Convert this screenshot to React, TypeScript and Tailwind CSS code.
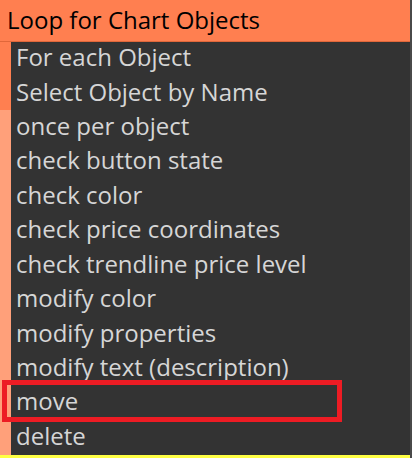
import React from "react";

const rows = [
  "For each Object",
  "Select Object by Name",
  "once per object",
  "check button state",
  "check color",
  "check price coordinates",
  "check trendline price level",
  "modify color",
  "modify properties",
  "modify text (description)",
  "move",
  "delete",
];

export default function App() {
  return (
    <div
      className="w-[412px] h-[458px] bg-[#333333] flex overflow-hidden relative"
      style={{ fontFamily: '"Open Sans", sans-serif' }}
    >
      <div className="flex-1 flex flex-col">
        <div className="h-[42px] bg-[#ff7f50] border-b border-[#e0673a] flex items-center pl-[7px] pb-[2px] text-[24px] text-black leading-none">
          Loop for Chart Objects
        </div>
        <div className="flex flex-1">
          <div className="w-[11px] flex flex-col">
            <div className="h-[68px] bg-[#ff7f50]" />
            <div className="flex-1 bg-[#ffa07a]" />
          </div>
          <div className="flex-1 flex flex-col">
            {rows.map((r) => (
              <div
                key={r}
                className="flex-1 flex items-center pl-[5px] pb-[4px] text-[24px] text-[#d6d6d6] leading-none"
              >
                {r}
              </div>
            ))}
          </div>
        </div>
        <div className="h-[3px] bg-[#ffff44]" />
      </div>
      <div className="w-[2px] bg-[#4a4a4a]" />
      <div className="absolute left-[2px] top-[380px] w-[340px] h-[42px] border-[5px] border-[#ed1c24]" />
    </div>
  );
}
